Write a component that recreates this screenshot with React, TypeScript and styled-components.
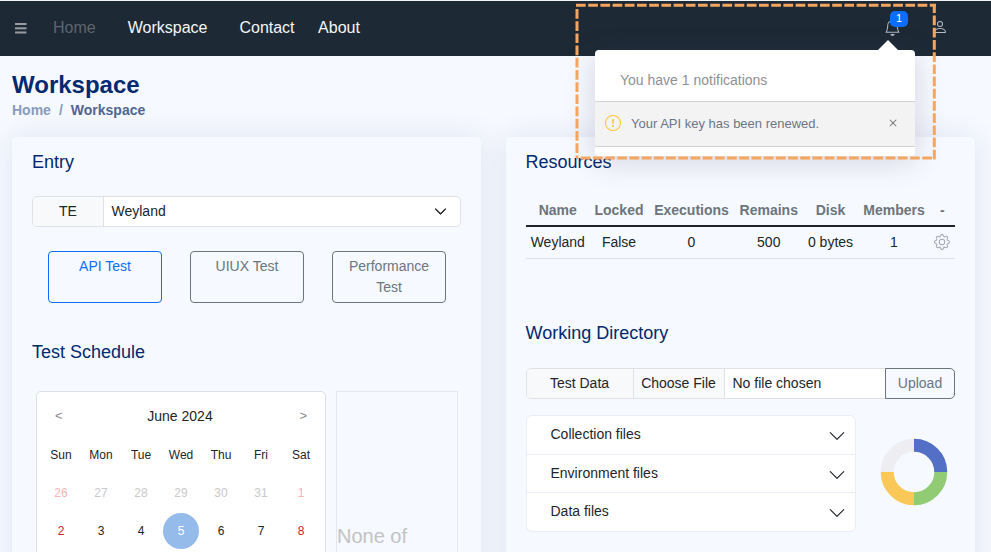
import React from 'react';
import styled, { createGlobalStyle } from 'styled-components';
import { BsBell, BsChevronDown, BsExclamationCircle, BsGear, BsPerson, BsX } from 'react-icons/bs';

const GlobalStyle = createGlobalStyle`
    html, body {
        margin: 0;
        height: 552px;
        overflow: hidden;
        background: #f6f9ff;
        font-family: "Liberation Sans", Arial, sans-serif;
        font-size: 14px;
        color: #212529;
    }
    * { box-sizing: border-box; }
`;

const Page = styled.div`
    position: relative;
    width: 991px;
    height: 552px;
    overflow: hidden;
`;

const Header = styled.header`
    height: 56px;
    border-top: 1px solid #f1f3f6;
    background: #1d2935;
    display: flex;
    align-items: center;
    padding: 0 0 2px 14px;
    color: #fff;
`;

const Burger = styled.svg`
    flex: none;
    margin-top: 2px;
    margin-right: 24px;
    fill: #969ca2;
`;

const NavLink = styled.a<{ $muted?: boolean; $gap: number }>`
    font-size: 16px;
    color: ${p => (p.$muted ? '#5d666f' : '#f4f6f8')};
    margin-right: ${p => p.$gap}px;
`;

const HeaderIcons = styled.div`
    margin-left: auto;
    display: flex;
    align-items: center;
    padding-right: 43px;
    padding-bottom: 1px;
`;

const BellWrap = styled.span`
    position: relative;
    display: flex;
    font-size: 17px;
    color: #aeb6be;
    margin-right: 31px;
`;

const Badge = styled.span`
    position: absolute;
    top: -8px;
    left: 6px;
    width: 18px;
    height: 16px;
    border-radius: 5px;
    background: #0d6efd;
    color: #fff;
    font-size: 11px;
    line-height: 15px;
    text-align: center;
`;

const UserIcon = styled.span`
    display: flex;
    font-size: 16px;
    color: #b4bbc2;
`;

const Main = styled.main`
    padding: 14px 16px 0 12px;
`;

const PageTitle = styled.h1`
    margin: 0;
    font-size: 24px;
    line-height: 29px;
    font-weight: 700;
    color: #012970;
`;

const Crumbs = styled.div`
    display: flex;
    margin-top: 1px;
    font-size: 14px;
    line-height: 21px;
    font-weight: 700;
`;

const Crumb = styled.span<{ $active?: boolean }>`
    color: ${p => (p.$active ? '#51678f' : '#899bbd')};
`;

const Slash = styled.span`
    color: #899bbd;
    padding: 0 8px;
`;

const Columns = styled.div`
    display: grid;
    grid-template-columns: 469px 469px;
    gap: 25px;
    margin-top: 16px;
`;

const Card = styled.section<{ $inset?: number }>`
    height: 560px;
    border-radius: 5px;
    background: #f6f9ff;
    box-shadow: 0 0 30px rgba(1, 41, 112, 0.1);
    padding: 14px 20px 0 ${p => p.$inset ?? 20}px;
`;

const CardTitle = styled.h5<{ $top?: number }>`
    margin: ${p => p.$top ?? 0}px 0 0;
    font-size: 18px;
    line-height: 22px;
    font-weight: 400;
    color: #012970;
`;

const InputGroup = styled.div<{ $top: number; $height: number }>`
    display: flex;
    margin-top: ${p => p.$top}px;
    height: ${p => p.$height}px;
    border: 1px solid #dee2e6;
    border-radius: 5px;
    background: #fff;
    font-size: 14px;
`;

const GroupLabel = styled.div<{ $width: number }>`
    flex: 0 0 ${p => p.$width}px;
    display: flex;
    align-items: center;
    justify-content: center;
    padding-bottom: 1px;
    background: #f8f9fa;
    border-right: 1px solid #dee2e6;
    color: #212529;
    &:first-child { border-radius: 4px 0 0 4px; }
`;

const SelectValue = styled.div`
    flex: 1;
    display: flex;
    align-items: center;
    justify-content: space-between;
    padding: 0 13px 1px 7.5px;
    svg { stroke: currentColor; stroke-width: 1; }
`;

const TestTypes = styled.div`
    display: flex;
    gap: 28px;
    margin: 24px 0 0 16px;
`;

const TestType = styled.div<{ $active?: boolean }>`
    width: 114px;
    height: 52px;
    padding: 4px 12px 0;
    border: 1px solid ${p => (p.$active ? '#0d6efd' : '#6c757d')};
    border-radius: 4px;
    color: ${p => (p.$active ? '#0d6efd' : '#6c757d')};
    font-size: 14px;
    line-height: 21px;
    text-align: center;
`;

const Schedule = styled.div`
    display: flex;
    gap: 10px;
    margin: 28px 0 0 4px;
`;

const Calendar = styled.div`
    width: 290px;
    height: 300px;
    flex: none;
    background: #fff;
    border: 1px solid #dcdfe6;
    border-radius: 5px;
    padding: 13px 0 0 4px;
`;

const CalendarHead = styled.div`
    display: flex;
    align-items: center;
    justify-content: space-between;
    height: 21px;
    padding: 0 18px 0 14px;
`;

const Arrow = styled.span`
    font-size: 13px;
    color: #8a8a8a;
`;

const Month = styled.span`
    font-size: 14px;
    color: #212529;
    margin-left: -2px;
`;

const DayGrid = styled.div`
    display: grid;
    grid-template-columns: repeat(7, 40px);
    grid-auto-rows: 38px;
    margin-top: 10px;
`;

const WeekDay = styled.span`
    display: flex;
    align-items: center;
    justify-content: center;
    font-size: 12px;
    color: #212529;
`;

const Day = styled.span<{ $tone?: 'weekend' | 'faded' | 'fadedWeekend'; $selected?: boolean }>`
    align-self: center;
    justify-self: center;
    width: 36px;
    height: 36px;
    border-radius: 50%;
    display: flex;
    align-items: center;
    justify-content: center;
    font-size: 12px;
    background: ${p => (p.$selected ? '#94bbe9' : 'transparent')};
    color: ${p =>
        p.$selected ? '#fff'
        : p.$tone === 'weekend' ? '#d0222a'
        : p.$tone === 'faded' ? '#c9c9c9'
        : p.$tone === 'fadedWeekend' ? '#f6b3b5'
        : '#212529'};
`;

const SidePanel = styled.div`
    width: 122px;
    height: 300px;
    border: 1px solid #e3e6ee;
    padding: 132px 0 0 0;
    font-size: 20px;
    line-height: 24px;
    color: #c3c3c3;
`;

const Table = styled.table`
    width: 429.5px;
    margin-top: 17px;
    table-layout: fixed;
    border-collapse: collapse;
    font-size: 14px;
    text-align: center;
`;

const Th = styled.th`
    height: 36px;
    padding: 4px 0 0;
    font-weight: 700;
    color: #6c757d;
    border-bottom: 2px solid #212529;
`;

const Td = styled.td`
    height: 32px;
    padding: 0;
    color: #212529;
    border-bottom: 1px solid #dee2e6;
`;

const GearIcon = styled(BsGear)`
    display: block;
    margin: 0 auto;
    font-size: 16px;
    color: #a5a9ad;
`;

const FileName = styled.div`
    flex: 1;
    display: flex;
    align-items: center;
    padding: 0 0 1px 8px;
`;

const UploadButton = styled.button`
    flex: 0 0 70px;
    margin: -1px -1px -1px 0;
    border: 1px solid #6c757d;
    border-radius: 0 5px 5px 0;
    background: #f6f9ff;
    color: #6c757d;
    font: 14px "Liberation Sans", Arial, sans-serif;
    padding: 0;
`;

const FilesRow = styled.div`
    display: flex;
    align-items: center;
    margin-top: 16px;
`;

const Accordion = styled.div`
    width: 330px;
    background: #fff;
    border: 1px solid #e9edf5;
    border-radius: 6px;
    flex: none;
`;

const AccordionRow = styled.div`
    height: 38.4px;
    display: flex;
    align-items: center;
    justify-content: space-between;
    padding: 0 9px 1px 24px;
    font-size: 14px;
    color: #212529;
    & + & { border-top: 1px solid #e9edf5; }
    svg { font-size: 18px; margin-top: 4px; }
`;

const Donut = styled.svg`
    margin: 0 0 2px 24px;
    flex: none;
`;

const Dropdown = styled.div`
    position: absolute;
    top: 50px;
    left: 595px;
    width: 320px;
    height: 106px;
    background: #fff;
    border-radius: 4px;
    box-shadow: 0 5px 30px rgba(82, 63, 105, 0.2);
    &::before {
        content: '';
        position: absolute;
        top: -10px;
        left: 283px;
        border-left: 10px solid transparent;
        border-right: 10px solid transparent;
        border-bottom: 10px solid #fff;
    }
`;

const DropdownHead = styled.div`
    height: 52px;
    padding: 21px 0 0 25px;
    font-size: 14px;
    line-height: 18px;
    color: #8e9095;
    border-bottom: 1px solid #d3d3d3;
`;

const Notice = styled.div`
    height: 45px;
    display: flex;
    align-items: center;
    padding: 0 14px 2px 10px;
    background: #f3f3f3;
    border-bottom: 1px solid #d3d3d3;
    font-size: 13px;
    color: #6f7488;
`;

const NoticeIcon = styled(BsExclamationCircle)`
    flex: none;
    font-size: 16px;
    color: #fdc532;
    margin-right: 10px;
`;

const NoticeClose = styled(BsX)`
    margin-left: auto;
    font-size: 16px;
    color: #777;
`;

const Highlight = styled.svg`
    position: absolute;
    top: 0;
    left: 570px;
    pointer-events: none;
    fill: none;
    stroke: #f6a55e;
    stroke-width: 3;
    stroke-dasharray: 9.7 2.5;
`;

const columnWidths = [64.5, 58, 87, 67.5, 56, 71, 25.5];
const headers = ['Name', 'Locked', 'Executions', 'Remains', 'Disk', 'Members', '-'];
const weekDays = ['Sun', 'Mon', 'Tue', 'Wed', 'Thu', 'Fri', 'Sat'];

function arc(cx: number, cy: number, r: number, a0: number, a1: number) {
    const rad = (a: number) => ((a - 90) * Math.PI) / 180;
    return `M${cx + r * Math.cos(rad(a0))} ${cy + r * Math.sin(rad(a0))}A${r} ${r} 0 0 1 ${cx + r * Math.cos(rad(a1))} ${cy + r * Math.sin(rad(a1))}`;
}

const segments = ['#5470c6', '#91cc75', '#fac858', '#eeeef2'];

function App() {
    return (
        <Page>
            <GlobalStyle />
            <Header>
                <Burger width={15} height={15} viewBox='0 0 15 15'>
                    <rect x={1} y={2} width={11.5} height={2} />
                    <rect x={1} y={6.3} width={11.5} height={2} />
                    <rect x={1} y={10.5} width={11.5} height={2} />
                </Burger>
                <NavLink $muted $gap={32}>Home</NavLink>
                <NavLink $gap={32}>Workspace</NavLink>
                <NavLink $gap={23.5}>Contact</NavLink>
                <NavLink $gap={0}>About</NavLink>
                <HeaderIcons>
                    <BellWrap>
                        <BsBell />
                        <Badge>1</Badge>
                    </BellWrap>
                    <UserIcon><BsPerson /></UserIcon>
                </HeaderIcons>
            </Header>
            <Main>
                <PageTitle>Workspace</PageTitle>
                <Crumbs>
                    <Crumb>Home</Crumb>
                    <Slash>/</Slash>
                    <Crumb $active>Workspace</Crumb>
                </Crumbs>
                <Columns>
                    <Card>
                        <CardTitle>Entry</CardTitle>
                        <InputGroup $top={23} $height={31}>
                            <GroupLabel $width={71}>TE</GroupLabel>
                            <SelectValue>Weyland <BsChevronDown size={13} /></SelectValue>
                        </InputGroup>
                        <TestTypes>
                            <TestType $active>API Test</TestType>
                            <TestType>UIUX Test</TestType>
                            <TestType>Performance Test</TestType>
                        </TestTypes>
                        <CardTitle $top={38}>Test Schedule</CardTitle>
                        <Schedule>
                            <Calendar>
                                <CalendarHead>
                                    <Arrow>&lt;</Arrow>
                                    <Month>June 2024</Month>
                                    <Arrow>&gt;</Arrow>
                                </CalendarHead>
                                <DayGrid>
                                    {weekDays.map(d => <WeekDay key={d}>{d}</WeekDay>)}
                                    <Day $tone='fadedWeekend'>26</Day>
                                    {[27, 28, 29, 30, 31].map(d => <Day key={d} $tone='faded'>{d}</Day>)}
                                    <Day $tone='fadedWeekend'>1</Day>
                                    <Day $tone='weekend'>2</Day>
                                    <Day>3</Day>
                                    <Day>4</Day>
                                    <Day $selected>5</Day>
                                    <Day>6</Day>
                                    <Day>7</Day>
                                    <Day $tone='weekend'>8</Day>
                                </DayGrid>
                            </Calendar>
                            <SidePanel>None of</SidePanel>
                        </Schedule>
                    </Card>
                    <Card $inset={19.5}>
                        <CardTitle>Resources</CardTitle>
                        <Table>
                            <colgroup>
                                {columnWidths.map((w, i) => <col key={i} style={{ width: w }} />)}
                            </colgroup>
                            <thead>
                                <tr>{headers.map(h => <Th key={h}>{h}</Th>)}</tr>
                            </thead>
                            <tbody>
                                <tr>
                                    <Td>Weyland</Td>
                                    <Td>False</Td>
                                    <Td>0</Td>
                                    <Td>500</Td>
                                    <Td>0 bytes</Td>
                                    <Td>1</Td>
                                    <Td><GearIcon /></Td>
                                </tr>
                            </tbody>
                        </Table>
                        <CardTitle $top={63}>Working Directory</CardTitle>
                        <InputGroup $top={24} $height={31}>
                            <GroupLabel $width={107}>Test Data</GroupLabel>
                            <GroupLabel $width={91}>Choose File</GroupLabel>
                            <FileName>No file chosen</FileName>
                            <UploadButton>Upload</UploadButton>
                        </InputGroup>
                        <FilesRow>
                            <Accordion>
                                <AccordionRow>Collection files <BsChevronDown /></AccordionRow>
                                <AccordionRow>Environment files <BsChevronDown /></AccordionRow>
                                <AccordionRow>Data files <BsChevronDown /></AccordionRow>
                            </Accordion>
                            <Donut width={68} height={68} viewBox='0 0 68 68'>
                                {segments.map((c, i) => (
                                    <path key={c} d={arc(34, 34, 26.8, i * 90, (i + 1) * 90)} fill='none' stroke={c} strokeWidth={13} />
                                ))}
                            </Donut>
                        </FilesRow>
                    </Card>
                </Columns>
            </Main>
            <Dropdown>
                <DropdownHead>You have 1 notifications</DropdownHead>
                <Notice>
                    <NoticeIcon />
                    Your API key has been renewed.
                    <NoticeClose />
                </Notice>
            </Dropdown>
            <Highlight width={370} height={165} viewBox='0 0 370 165'>
                <path d='M6 5.3H365.8' />
                <path d='M7 9V158' />
                <path d='M364.3 159.5V4' />
                <path d='M362 158H7' />
            </Highlight>
        </Page>
    );
}

export default App;
